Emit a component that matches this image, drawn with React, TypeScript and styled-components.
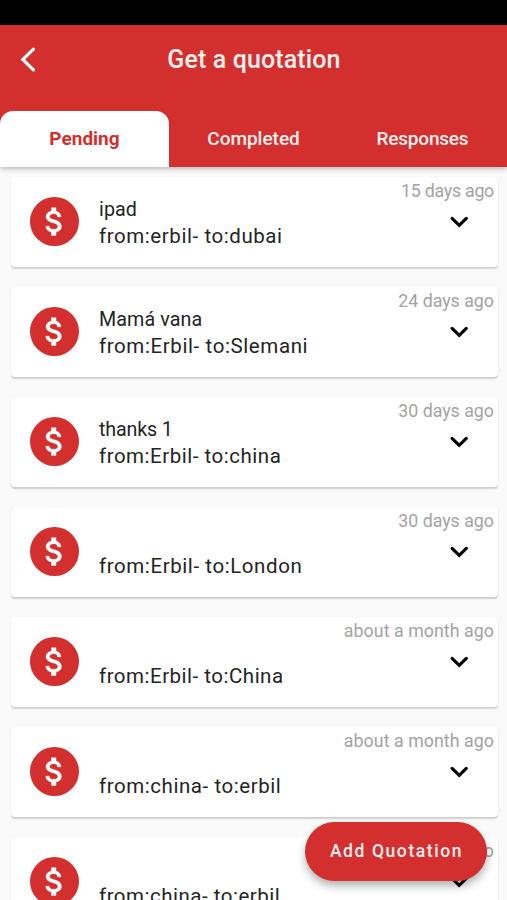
import React from 'react';
import styled, { createGlobalStyle } from 'styled-components';

const GlobalStyle = createGlobalStyle`
  * { box-sizing: border-box; }
  body { margin: 0; background: #fafafa; font-family: Roboto, sans-serif; overflow: hidden; }
  button { border: 0; padding: 0; background: none; font-family: inherit; }
`;

const Screen = styled.div`
  position: relative;
  display: flex;
  flex-direction: column;
  width: 100%;
  height: 900px;
  overflow: hidden;
  background: #fafafa;
`;

const StatusBar = styled.div`
  height: 25px;
  flex: none;
  background: #000;
`;

const Header = styled.header`
  position: relative;
  z-index: 1;
  flex: none;
  height: 142px;
  display: flex;
  flex-direction: column;
  justify-content: space-between;
  background: #d32f2f;
  color: #fff0ee;
  box-shadow: 0 2px 5px rgba(0, 0, 0, 0.25);
`;

const TitleBar = styled.div`
  display: grid;
  grid-template-columns: 60px 1fr 60px;
  align-items: center;
  height: 69px;
`;

const BackButton = styled.button`
  display: flex;
  padding-left: 20px;
  svg { width: 16px; height: 25px; fill: none; stroke: #fff; stroke-width: 3.2; stroke-linecap: round; }
`;

const Title = styled.h1`
  margin: 0;
  padding-left: 1px;
  text-align: center;
  font-size: 25px;
  font-weight: 500;
  line-height: 30px;
  letter-spacing: 0.12px;
`;

const Tabs = styled.nav`
  display: grid;
  grid-template-columns: repeat(3, 1fr);
  height: 56.5px;
`;

const Tab = styled.button<{ $active?: boolean; $tracking: number }>`
  height: 100%;
  border-radius: 13px 13px 0 0;
  background: ${(p) => (p.$active ? '#fff' : 'transparent')};
  color: ${(p) => (p.$active ? '#d32f2f' : '#fff0ee')};
  font-size: 19px;
  font-weight: ${(p) => (p.$active ? 700 : 500)};
  letter-spacing: ${(p) => p.$tracking}px;
`;

const List = styled.main`
  display: flex;
  flex-direction: column;
  gap: 20px;
  padding: 10px 9.5px 0 11px;
`;

const Card = styled.article`
  flex: none;
  display: grid;
  grid-template-columns: 49px 1fr auto;
  column-gap: 20px;
  height: 90px;
  padding-left: 19px;
  border-radius: 4px;
  background: #fff;
  box-shadow: 0 1.5px 1.5px rgba(0, 0, 0, 0.17), 0 0 1px rgba(0, 0, 0, 0.05);
`;

const Badge = styled.div`
  align-self: center;
  display: flex;
  align-items: center;
  justify-content: center;
  width: 49px;
  height: 49px;
  margin-bottom: 1px;
  border-radius: 50%;
  background: #d32f2f;
  svg { width: 37px; height: 37px; fill: #fff; stroke: #fff; stroke-width: 0.25; }
`;

const Details = styled.div`
  padding-top: 20px;
  white-space: nowrap;
  color: #242424;
`;

const Name = styled.div<{ $tracking?: number }>`
  height: 26px;
  font-size: 19.7px;
  line-height: 26px;
  letter-spacing: ${(p) => p.$tracking ?? 0}px;
`;

const Route = styled.div<{ $tracking: number }>`
  font-size: 20.5px;
  line-height: 27px;
  letter-spacing: ${(p) => p.$tracking}px;
`;

const Side = styled.div`
  display: flex;
  flex-direction: column;
  align-items: flex-end;
  padding: 3px 3.5px 0 0;
`;

const Age = styled.time<{ $tracking: number }>`
  height: 22px;
  line-height: 22px;
  font-size: 17.8px;
  color: #a3a3a3;
  letter-spacing: ${(p) => p.$tracking}px;
`;

const ExpandButton = styled.button`
  display: flex;
  margin: 13px 25px 0 0;
  svg { width: 20px; height: 14px; fill: none; stroke: #000; stroke-width: 3.2; stroke-linecap: round; }
`;

const AddButton = styled.button`
  position: absolute;
  z-index: 2;
  left: 305px;
  top: 822px;
  width: 182px;
  height: 58.5px;
  padding-left: 1px;
  border-radius: 30px;
  background: #d32f2f;
  color: #fff0ee;
  font-size: 17.5px;
  font-weight: 500;
  letter-spacing: 1.58px;
  box-shadow: 0 5px 8px rgba(0, 0, 0, 0.3);
`;

const BackIcon = () => (
  <svg viewBox="0 0 16 25"><path d="M13.4 2.2L2.8 12.5l10.6 10.3" /></svg>
);

const DollarIcon = () => (
  <svg viewBox="0 0 24 24">
    <path d="M11.8 10.9c-2.27-.59-3-1.2-3-2.15 0-1.09 1.01-1.85 2.7-1.85 1.78 0 2.44.85 2.5 2.1h2.21c-.07-1.72-1.12-3.3-3.21-3.81V3h-3v2.16c-1.94.42-3.5 1.68-3.5 3.61 0 2.31 1.91 3.46 4.7 4.13 2.5.6 3 1.48 3 2.41 0 .69-.49 1.79-2.7 1.79-2.06 0-2.87-.92-2.98-2.1h-2.2c.12 2.19 1.76 3.42 3.68 3.83V21h3v-2.15c1.95-.37 3.5-1.5 3.5-3.55 0-2.84-2.43-3.81-4.7-4.4z" />
  </svg>
);

const ExpandIcon = () => (
  <svg viewBox="0 0 20 14"><path d="M3.1 3.4L10.2 10.3l7.1-6.9" /></svg>
);

interface Quotation {
  name: string;
  nameTracking?: number;
  route: string;
  routeTracking: number;
  age: string;
  ageTracking: number;
}

const quotations: Quotation[] = [
  { name: 'ipad', nameTracking: 0.1, route: 'from:erbil- to:dubai', routeTracking: 0.57, age: '15 days ago', ageTracking: -0.26 },
  { name: 'Mamá vana', nameTracking: 0.1, route: 'from:Erbil- to:Slemani', routeTracking: 0.6, age: '24 days ago', ageTracking: 0 },
  { name: 'thanks 1', nameTracking: -0.15, route: 'from:Erbil- to:china', routeTracking: 0.52, age: '30 days ago', ageTracking: 0 },
  { name: '', route: 'from:Erbil- to:London', routeTracking: 0.58, age: '30 days ago', ageTracking: 0 },
  { name: '', route: 'from:Erbil- to:China', routeTracking: 0.5, age: 'about a month ago', ageTracking: 0.05 },
  { name: '', route: 'from:china- to:erbil', routeTracking: 0.56, age: 'about a month ago', ageTracking: 0.05 },
  { name: '', route: 'from:china- to:erbil', routeTracking: 0.5, age: 'about a month ago', ageTracking: 0.05 },
];

export default function App() {
  return (
    <Screen>
      <GlobalStyle />
      <StatusBar />
      <Header>
        <TitleBar>
          <BackButton aria-label="Back"><BackIcon /></BackButton>
          <Title>Get a quotation</Title>
        </TitleBar>
        <Tabs>
          <Tab $active $tracking={0}>Pending</Tab>
          <Tab $tracking={-0.02}>Completed</Tab>
          <Tab $tracking={-0.2}>Responses</Tab>
        </Tabs>
      </Header>
      <List>
        {quotations.map((q, i) => (
          <Card key={i}>
            <Badge><DollarIcon /></Badge>
            <Details>
              <Name $tracking={q.nameTracking}>{q.name}</Name>
              <Route $tracking={q.routeTracking}>{q.route}</Route>
            </Details>
            <Side>
              <Age $tracking={q.ageTracking}>{q.age}</Age>
              <ExpandButton aria-label="Expand"><ExpandIcon /></ExpandButton>
            </Side>
          </Card>
        ))}
      </List>
      <AddButton>Add Quotation</AddButton>
    </Screen>
  );
}
